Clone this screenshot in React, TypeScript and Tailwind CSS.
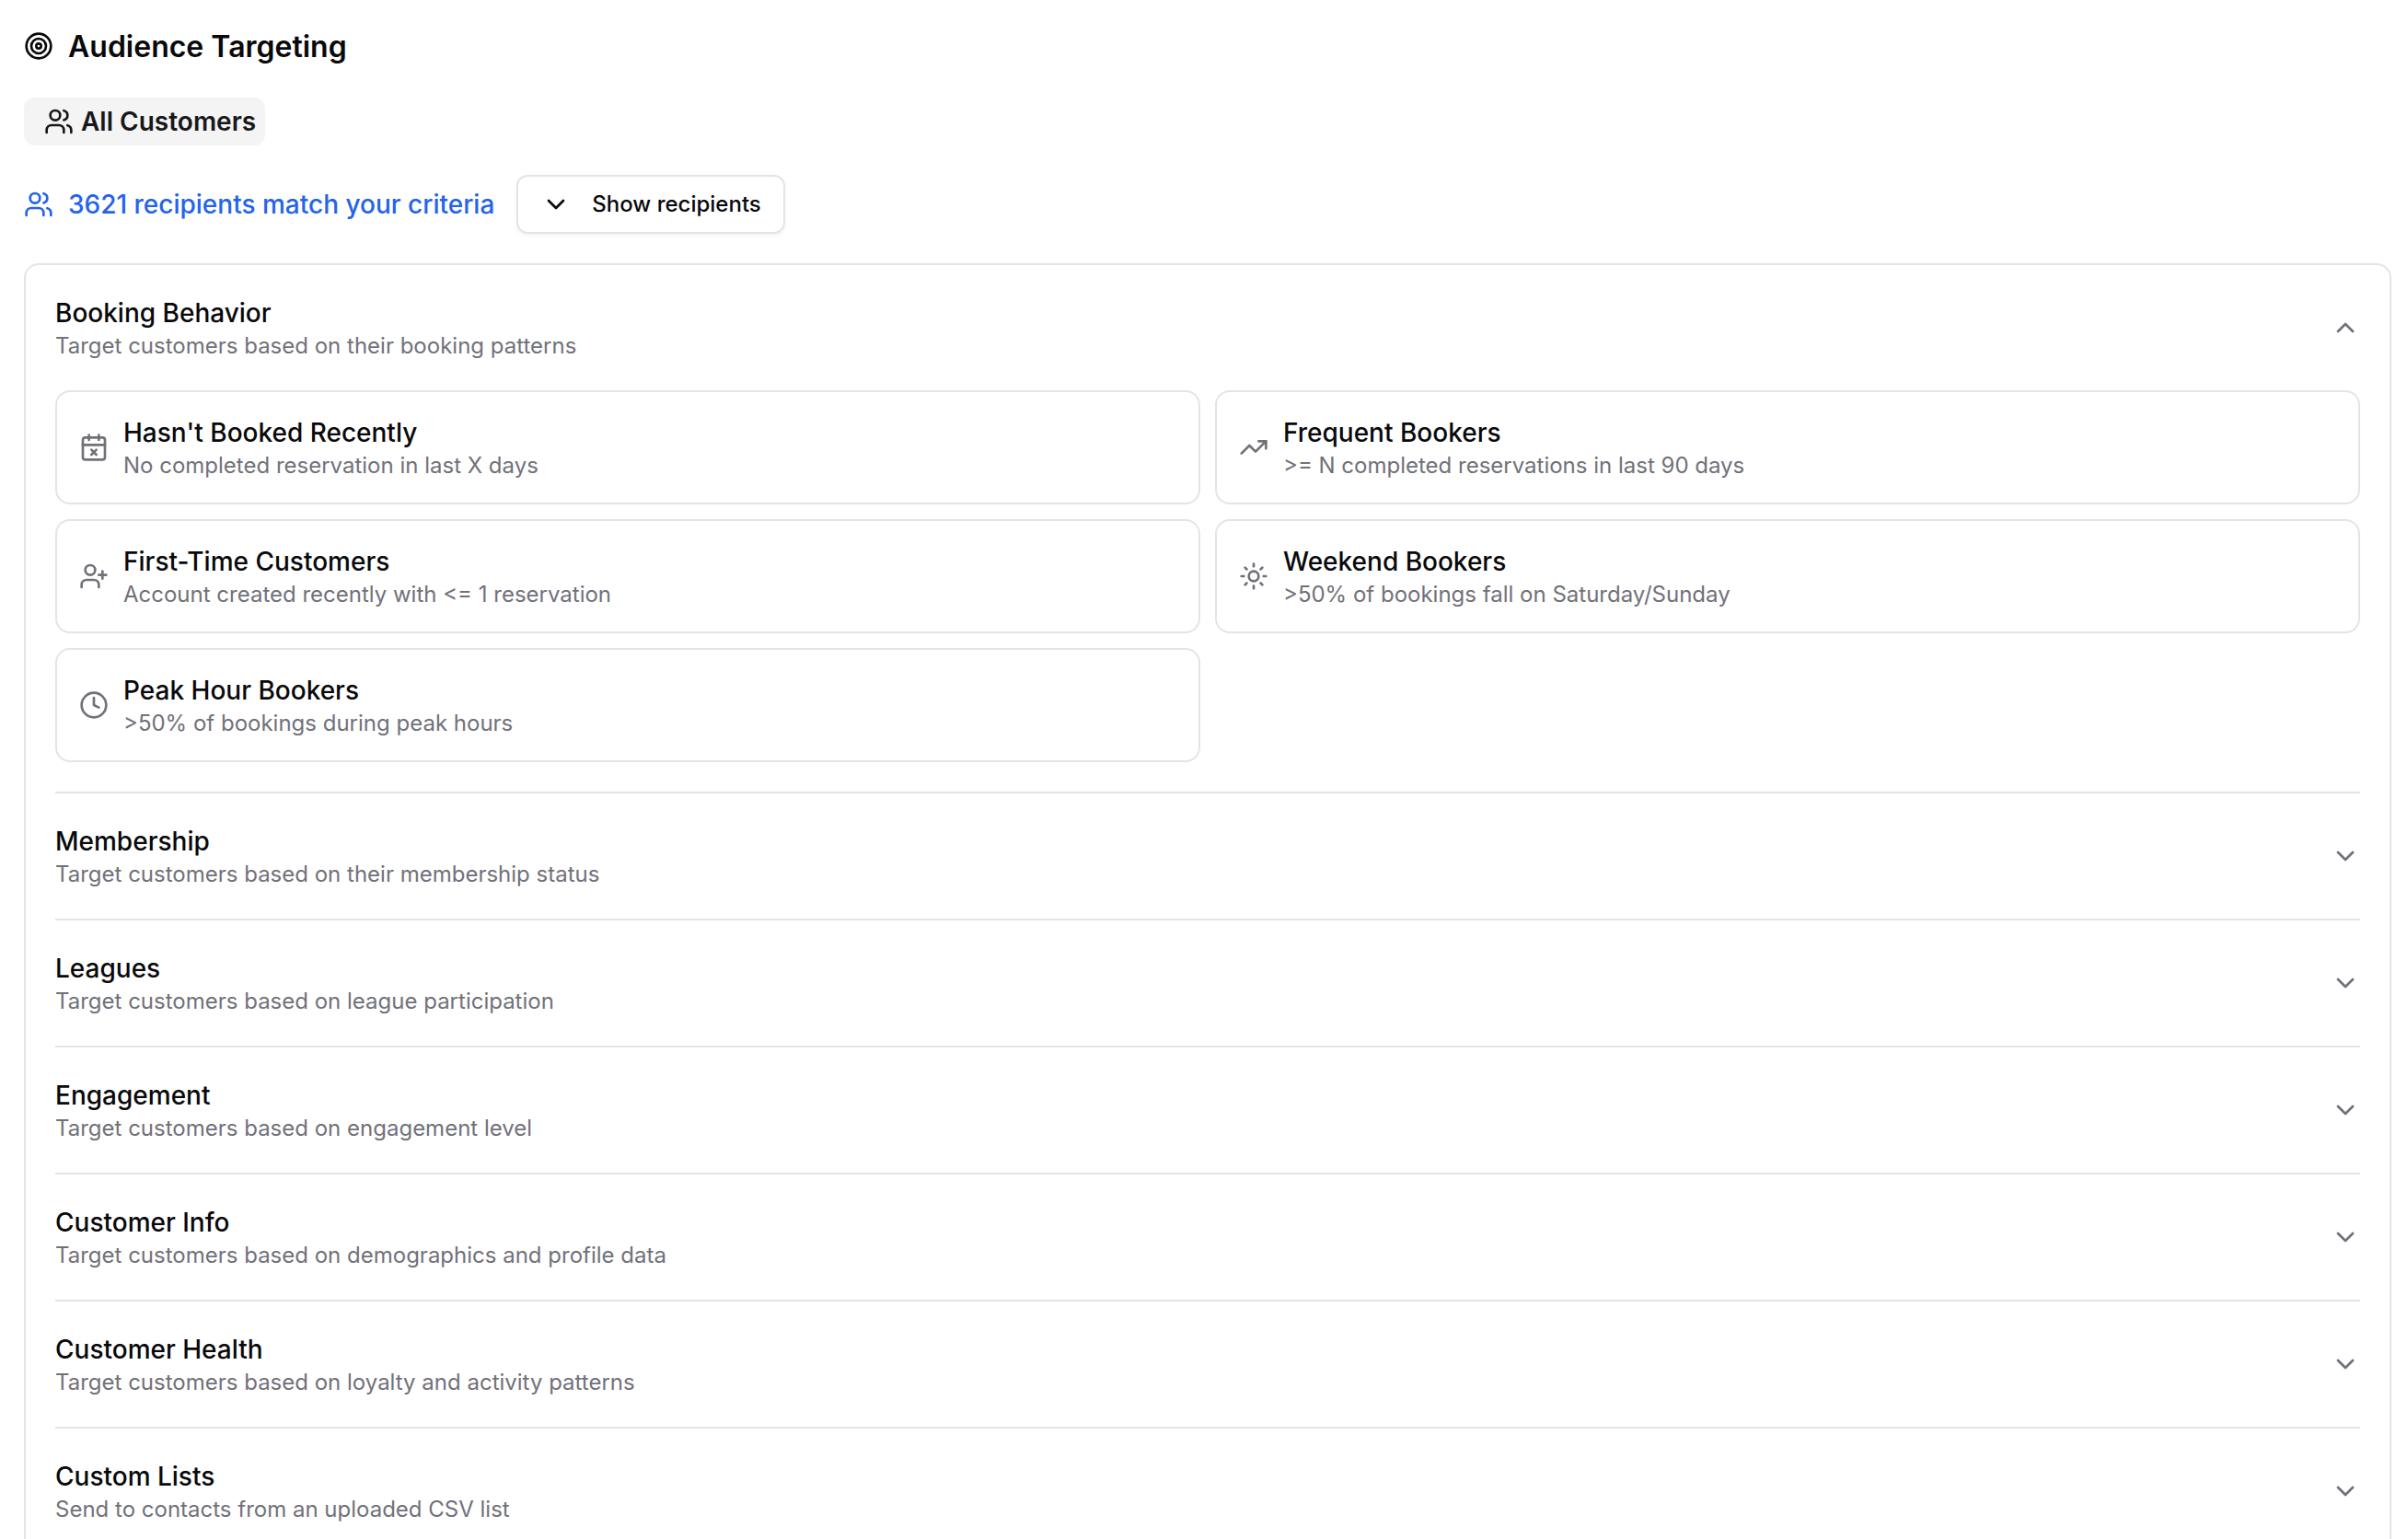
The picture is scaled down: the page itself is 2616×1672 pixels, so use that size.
import {
  CalendarX,
  ChevronDown,
  ChevronUp,
  Clock,
  Sun,
  Target,
  TrendingUp,
  UserPlus,
  Users,
  type LucideIcon,
} from "lucide-react";
import { useState } from "react";

interface Criterion {
  icon: LucideIcon;
  title: string;
  description: string;
}

interface Section {
  id: string;
  title: string;
  description: string;
  criteria: Criterion[];
}

const SECTIONS: Section[] = [
  {
    id: "booking",
    title: "Booking Behavior",
    description: "Target customers based on their booking patterns",
    criteria: [
      { icon: CalendarX, title: "Hasn't Booked Recently", description: "No completed reservation in last X days" },
      { icon: TrendingUp, title: "Frequent Bookers", description: ">= N completed reservations in last 90 days" },
      { icon: UserPlus, title: "First-Time Customers", description: "Account created recently with <= 1 reservation" },
      { icon: Sun, title: "Weekend Bookers", description: ">50% of bookings fall on Saturday/Sunday" },
      { icon: Clock, title: "Peak Hour Bookers", description: ">50% of bookings during peak hours" },
    ],
  },
  { id: "membership", title: "Membership", description: "Target customers based on their membership status", criteria: [] },
  { id: "leagues", title: "Leagues", description: "Target customers based on league participation", criteria: [] },
  { id: "engagement", title: "Engagement", description: "Target customers based on engagement level", criteria: [] },
  { id: "info", title: "Customer Info", description: "Target customers based on demographics and profile data", criteria: [] },
  { id: "health", title: "Customer Health", description: "Target customers based on loyalty and activity patterns", criteria: [] },
  { id: "lists", title: "Custom Lists", description: "Send to contacts from an uploaded CSV list", criteria: [] },
];

function CriterionCard({ icon: Icon, title, description }: Criterion) {
  return (
    <button className="flex items-center gap-4 rounded-2xl border-2 border-[#e4e4e4] p-6 text-left">
      <Icon className="size-8 shrink-0 text-[#71717a]" />
      <div>
        <p className="text-[28px] leading-10 font-medium">{title}</p>
        <p className="text-2xl leading-8 text-[#71717a]">{description}</p>
      </div>
    </button>
  );
}

export default function App() {
  const [open, setOpen] = useState("booking");

  return (
    <div className="h-[1672px] overflow-hidden bg-white pt-7 pr-[18px] pl-[26px] font-['Inter',sans-serif] text-[#09090b]">
      {/* Heading */}
      <div className="flex h-11 items-center gap-4">
        <Target className="size-8" />
        <h2 className="pt-0.5 text-[32px] leading-[44px] font-semibold">Audience Targeting</h2>
      </div>

      {/* Active filters */}
      <div className="mt-[34px] flex">
        <div className="flex h-[52px] items-center gap-2 rounded-xl bg-[#f4f4f5] pr-2.5 pl-[22px] text-[#18181b]">
          <Users className="size-8" />
          <span className="text-[28px] leading-10 font-semibold">All Customers</span>
        </div>
      </div>

      {/* Recipient count */}
      <div className="mt-8 flex items-center gap-6">
        <div className="flex items-center gap-4 text-[#2563eb]">
          <Users className="size-8" />
          <span className="text-[28px] leading-10 font-medium">3621 recipients match your criteria</span>
        </div>
        <button className="flex h-16 items-center gap-[23px] rounded-xl border-2 border-[#e4e4e4] pr-6 pl-[25px] shadow-[0_2px_4px_rgba(0,0,0,0.05)]">
          <ChevronDown className="size-8" />
          <span className="text-2xl leading-8 font-medium">Show recipients</span>
        </button>
      </div>

      {/* Criteria sections */}
      <div className="mt-8 divide-y-2 divide-[#e4e4e4] rounded-2xl border-2 border-[#e4e4e4] px-8">
        {SECTIONS.map((s) => {
          const Chevron = open === s.id ? ChevronUp : ChevronDown;
          return (
            <section key={s.id}>
              <button
                className="flex w-full items-center justify-between py-8 text-left"
                onClick={() => setOpen(open === s.id ? "" : s.id)}
              >
                <div>
                  <h3 className="text-[28px] leading-10 font-medium">{s.title}</h3>
                  <p className="text-2xl leading-8 text-[#71717a]">{s.description}</p>
                </div>
                <Chevron className="size-8 text-[#71717a]" />
              </button>
              {open === s.id && s.criteria.length > 0 && (
                <div className="grid grid-cols-2 gap-4 pb-8">
                  {s.criteria.map((c) => (
                    <CriterionCard key={c.title} {...c} />
                  ))}
                </div>
              )}
            </section>
          );
        })}
      </div>
    </div>
  );
}
